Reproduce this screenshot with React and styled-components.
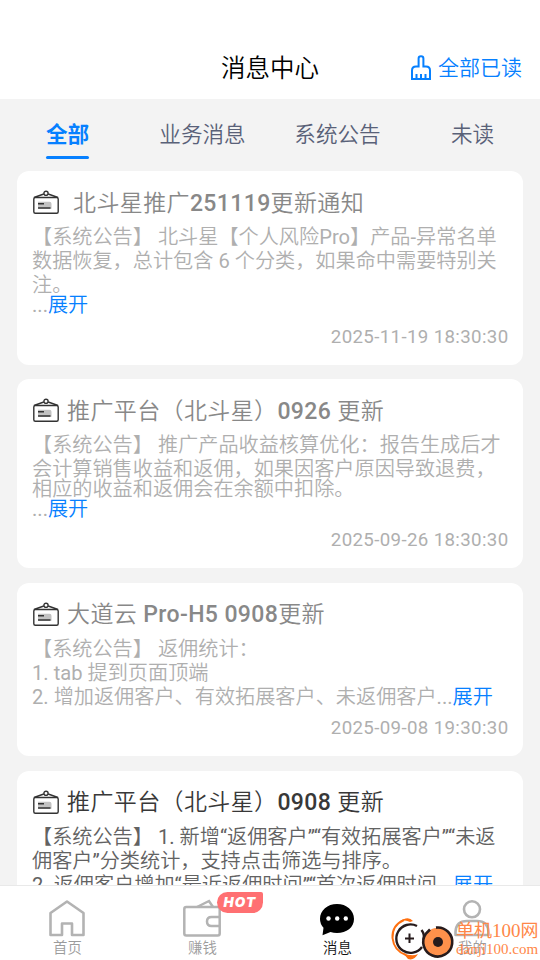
import React from 'react';
import styled, { createGlobalStyle } from 'styled-components';

const GlobalStyle = createGlobalStyle`
  * {
    box-sizing: border-box;
  }

  body {
    margin: 0;
    background: #f3f3f3;
    font-family: Roboto, 'Noto Sans CJK SC DemiLight', 'Noto Sans CJK SC', sans-serif;
    font-weight: 400;
  }
`;

const TABS = ['全部', '业务消息', '系统公告', '未读'];

const MESSAGES = [
  {
    title: '北斗星推广251119更新通知',
    indent: 6,
    read: true,
    height: 193.4,
    lines: [
      { text: '【系统公告】 北斗星【个人风险Pro】产品-异常名单', height: 24 },
      { text: '数据恢复，总计包含 6 个分类，如果命中需要特别关', height: 24 },
      { text: '注。', height: 24 },
      { text: '...', height: 16, more: true },
    ],
    time: '2025-11-19 18:30:30',
  },
  {
    title: '推广平台（北斗星）0926 更新',
    read: true,
    height: 189.1,
    lines: [
      { text: '【系统公告】 推广产品收益核算优化：报告生成后才', height: 24 },
      { text: '会计算销售收益和返佣，如果因客户原因导致退费，', height: 24 },
      { text: '相应的收益和返佣会在余额中扣除。', height: 15 },
      { text: '...', height: 25, more: true },
    ],
    time: '2025-09-26 18:30:30',
  },
  {
    title: '大道云 Pro-H5 0908更新',
    read: true,
    height: 173.6,
    lines: [
      { text: '【系统公告】 返佣统计：', height: 24 },
      { text: '1. tab 提到页面顶端', height: 24 },
      { text: '2. 增加返佣客户、有效拓展客户、未返佣客户...', height: 24, more: true },
    ],
    time: '2025-09-08 19:30:30',
  },
  {
    title: '推广平台（北斗星）0908 更新',
    height: 194,
    lines: [
      { text: '【系统公告】 1. 新增“返佣客户”“有效拓展客户”“未返', height: 24 },
      { text: '佣客户”分类统计，支持点击筛选与排序。', height: 24 },
      { text: '2. 返佣客户增加“最近返佣时间”“首次返佣时间...', height: 24, more: true },
    ],
    time: '2025-09-08 18:30:30',
  },
];

const Screen = styled.div`
  position: relative;
  display: flex;
  flex-direction: column;
  width: 540px;
  height: 960px;
  overflow: hidden;
  background: #f3f3f3;
`;

const Header = styled.header`
  display: grid;
  grid-template-columns: 1fr auto 1fr;
  align-items: center;
  flex: none;
  height: 99px;
  padding: 38px 18px 0;
  background: #fff;
`;

const PageTitle = styled.h1`
  grid-column: 2;
  margin: 0;
  color: #000;
  font-size: 24.48px;
  font-weight: 400;
  line-height: 36px;
`;

const ReadAll = styled.button`
  display: flex;
  align-items: center;
  justify-self: end;
  gap: 6px;
  padding: 0 0 1px;
  border: 0;
  background: none;
  color: #0680ff;
  font: inherit;
  font-size: 21px;
  line-height: 30px;
`;

const TabList = styled.nav`
  display: grid;
  grid-template-columns: repeat(4, 135px);
  flex: none;
  height: 72.3px;
`;

const Tab = styled.div`
  display: flex;
  flex-direction: column;
  align-items: center;
  padding-top: ${props => (props.$active ? 18 : 20)}px;
  color: ${props => (props.$active ? '#0680ff' : '#596178')};
  font-size: 21.6px;
  font-weight: ${props => (props.$active ? 700 : 400)};
  font-family: ${props => (props.$active ? "'Noto Sans CJK SC', sans-serif" : 'inherit')};
  line-height: 32px;

  &::after {
    content: '';
    width: 43px;
    height: 3px;
    margin-top: 7px;
    border-radius: 2px;
    background: ${props => (props.$active ? '#0680ff' : 'transparent')};
  }
`;

const List = styled.main`
  display: flex;
  flex: 1;
  flex-direction: column;
  gap: 14.4px;
  min-height: 0;
  overflow: hidden;
  padding: 0 17px;
`;

const Card = styled.article`
  display: flex;
  flex: none;
  flex-direction: column;
  height: ${props => props.$height}px;
  padding: 14px 14.5px 15px 15px;
  border-radius: 12px;
  background: #fff;
  color: ${props => (props.$read ? '#afafaf' : '#626262')};
`;

const CardHeader = styled.div`
  display: flex;
  align-items: center;
  gap: 7px;
  height: 36px;
  margin-bottom: 4px;
  color: ${props => (props.$read ? '#888' : '#383838')};
`;

const CardTitle = styled.h2`
  margin: 0;
  padding: 1px 0 0 ${props => props.$indent || 0}px;
  font-size: 23px;
  font-weight: 500;
  letter-spacing: 0.38px;
  line-height: 34px;
  white-space: nowrap;
`;

const Line = styled.div`
  display: flex;
  align-items: center;
  height: ${props => props.$height}px;
  font-size: 20.16px;
  line-height: 24px;
  white-space: pre;
`;

const More = styled.span`
  color: #0680ff;
`;

const Time = styled.time`
  align-self: flex-end;
  margin-top: auto;
  font-size: 18.7px;
  letter-spacing: 0.35px;
  line-height: 26px;
`;

const TabBar = styled.footer`
  display: grid;
  grid-template-columns: repeat(4, 135px);
  flex: none;
  height: 75px;
  border-top: 1px solid #e9e9e9;
  background: #fff;
`;

const BarItem = styled.div`
  position: relative;
  display: flex;
  flex-direction: column;
  align-items: center;
  padding-top: 13px;
  color: ${props => (props.$active ? '#111' : '#9c9c9c')};
  font-size: 14.4px;
  line-height: 20px;

  svg {
    display: block;
    margin: 0 1px 2px 0;
  }
`;

const HotBadge = styled.span`
  position: absolute;
  top: 6px;
  left: 82px;
  width: 46px;
  height: 21px;
  border-radius: 11px 2px 11px 11px;
  background: #ff7072;
  color: #fff;
  font-family: Inter, sans-serif;
  font-size: 13.5px;
  font-style: italic;
  font-weight: 900;
  letter-spacing: 1.2px;
  line-height: 21px;
  text-align: center;
`;

const Stamp = styled.div`
  position: absolute;
  top: 914px;
  left: 390px;
  display: flex;
  width: 150px;
  height: 46px;
  color: #ff8748;
`;

const StampText = styled.div`
  display: flex;
  flex-direction: column;
  padding-top: 6px;
  white-space: nowrap;
`;

const StampName = styled.span`
  font-family: 'Liberation Serif', 'Noto Sans CJK SC', serif;
  font-size: 18px;
  line-height: 22px;

  b {
    font-size: 19px;
    font-weight: 400;
  }
`;

const StampSite = styled.span`
  font-family: 'Liberation Serif', serif;
  font-size: 15px;
  line-height: 15px;
`;

const BrushIcon = () => (
  <svg width="22" height="26" viewBox="0 0 22 26" fill="none" stroke="currentColor" strokeWidth="2">
    <path d="M8.6 11.5V3.5Q8.6 1.2 11 1.2T13.4 3.5V11.5H16Q20 11.5 20 15.5V24H2V15.5Q2 11.5 6 11.5Z" />
    <path d="M6.5 24V19M11 24V19M15.5 24V19" />
  </svg>
);

const BoardIcon = () => (
  <svg width="28" height="26" viewBox="0 0 28 26" fill="none" stroke="#333" strokeWidth="1.4">
    <path d="M2 7.5L11.8 4M16.2 4L26 7.5" />
    <circle cx="14" cy="3.3" r="2.1" />
    <rect x="1.8" y="7.5" width="24.4" height="15.8" rx="1.5" />
    <path fill="#c2c2c2" stroke="none" d="M6 11.8h11.5q2 0 2 2v5H8q-2 0-2-2z" />
    <path strokeWidth="1.6" d="M6 13.8h6M6 18h12.5" />
  </svg>
);

const HomeIcon = () => (
  <svg width="38" height="38" viewBox="0 0 38 38" fill="none" stroke="#b3b3b3" strokeWidth="2.6">
    <path strokeLinejoin="round" d="M2.5 14L19 2.5 35.5 14V36H24V24.5H14V36H2.5Z" />
  </svg>
);

const WalletIcon = () => (
  <svg width="38" height="38" viewBox="0 0 38 38" fill="none" stroke="#b3b3b3" strokeWidth="2.5">
    <rect x="1.3" y="8" width="35.4" height="28.5" rx="2" />
    <path d="M14 8L26 2L30 8" />
    <path d="M37 18H28.5Q24 18 24 22.5T28.5 27H37" />
  </svg>
);

const ChatIcon = () => (
  <svg width="38" height="38" viewBox="0 0 38 38">
    <path
      fill="#000"
      d="M19 5C28.5 5 36 11.3 36 20C36 28.6 28.5 34 19 34Q15.5 34 12.5 33L4.5 36.3L5.5 28.8Q2 25 2 20C2 11.3 9.5 5 19 5Z"
    />
    <g fill="#fff">
      <circle cx="10.5" cy="19.5" r="2.2" />
      <circle cx="19.2" cy="19.5" r="2.2" />
      <circle cx="27.8" cy="19.5" r="2.2" />
    </g>
  </svg>
);

const UserIcon = () => (
  <svg width="38" height="38" viewBox="0 0 38 38" fill="none" stroke="#b3b3b3" strokeWidth="2.6">
    <circle cx="19" cy="10.3" r="8" />
    <path strokeLinejoin="round" d="M2.5 36V33Q3 22 14 22H24Q35 22 35.5 33V36Z" />
  </svg>
);

const StampIcon = () => (
  <svg width="66" height="46" viewBox="0 0 66 46" fill="none">
    <path stroke="#ff7010" strokeWidth="2" d="M14 6Q2 11 2.5 24Q4 37 16 41" />
    <path fill="#ff7010" d="M9 8Q18 1 23 7L20 8Q15 5 9 8ZM13 39Q22 43 28 40Q24 47 18 45Z" />
    <circle cx="19.5" cy="24.5" r="14" fill="#fff" />
    <path stroke="#271b1c" strokeWidth="2.4" d="M27 12A14.2 14.2 0 1 0 32 33M31.5 16Q35 20.5 33.5 26" />
    <path stroke="#271b1c" strokeWidth="2" d="M19.5 19.5V29M15 24.5H24" />
    <circle cx="48" cy="28" r="14.3" fill="#ff914b" />
    <path stroke="#271b1c" strokeWidth="2.6" d="M46 13.6A14.5 14.5 0 1 1 36 19.5L40 15.5" />
    <circle cx="48" cy="28" r="5" fill="#271b1c" />
  </svg>
);

const BAR_ITEMS = [
  { label: '首页', icon: HomeIcon },
  { label: '赚钱', icon: WalletIcon, hot: true },
  { label: '消息', icon: ChatIcon, active: true },
  { label: '我的', icon: UserIcon },
];

export default function App() {
  return (
    <Screen>
      <GlobalStyle />
      <Header>
        <PageTitle>消息中心</PageTitle>
        <ReadAll>
          <BrushIcon />
          全部已读
        </ReadAll>
      </Header>
      <TabList>
        {TABS.map((tab, index) => (
          <Tab key={tab} $active={index === 0}>
            {tab}
          </Tab>
        ))}
      </TabList>
      <List>
        {MESSAGES.map(message => (
          <Card key={message.title} $height={message.height} $read={message.read}>
            <CardHeader $read={message.read}>
              <BoardIcon />
              <CardTitle $indent={message.indent}>{message.title}</CardTitle>
            </CardHeader>
            {message.lines.map(line => (
              <Line key={line.text} $height={line.height}>
                {line.text}
                {line.more && <More>展开</More>}
              </Line>
            ))}
            <Time>{message.time}</Time>
          </Card>
        ))}
      </List>
      <TabBar>
        {BAR_ITEMS.map(({ label, icon: Icon, hot, active }) => (
          <BarItem key={label} $active={active}>
            <Icon />
            {label}
            {hot && <HotBadge>HOT</HotBadge>}
          </BarItem>
        ))}
      </TabBar>
      <Stamp>
        <StampIcon />
        <StampText>
          <StampName>
            单机<b>100</b>网
          </StampName>
          <StampSite>danji100.com</StampSite>
        </StampText>
      </Stamp>
    </Screen>
  );
}
